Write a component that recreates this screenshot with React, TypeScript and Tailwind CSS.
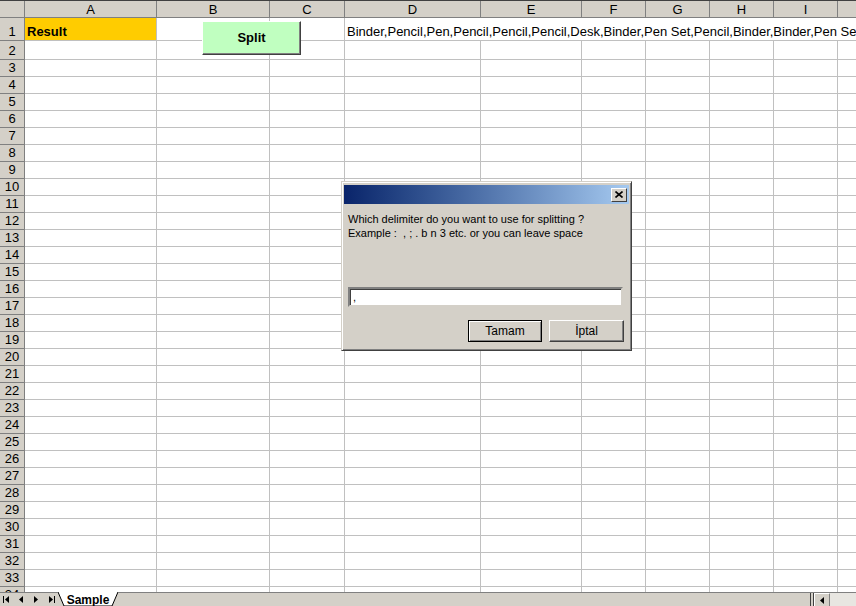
import React from 'react'

const COLS = ['A', 'B', 'C', 'D', 'E', 'F', 'G', 'H', 'I', 'J']
const GRID = 'grid grid-cols-[25px_132px_113px_75px_136px_101px_64px_64px_64px_64px_64px]'
const ROW1_TEXT =
  'Binder,Pencil,Pen,Pencil,Pencil,Pencil,Desk,Binder,Pen Set,Pencil,Binder,Binder,Pen Set,Desk,Pencil,Binder'

const HeaderRow: React.FC = () => (
  <div className={`${GRID} h-[18px] shrink-0 border-t border-[#404040]`}>
    <div className="bg-[#d4d0c8] border-r border-b border-[#808080]" />
    {COLS.map((c) => (
      <div
        key={c}
        className="bg-[#d4d0c8] border-r border-b border-[#808080] flex items-center justify-center text-[13px] leading-none text-black"
      >
        {c}
      </div>
    ))}
  </div>
)

const RowLabel: React.FC<{ n: number }> = ({ n }) => (
  <div className="bg-[#d4d0c8] border-r border-b border-[#808080] flex items-end justify-center pb-[2px] text-[13px] leading-none text-black">
    {n}
  </div>
)

const FirstRow: React.FC = () => (
  <div className={`${GRID} h-[23px] shrink-0`}>
    <div className="bg-[#d4d0c8] border-r border-b border-[#808080] flex items-end justify-center pb-[2px] text-[13px] leading-none text-black">
      1
    </div>
    <div className="bg-[#ffcc00] border-r border-b border-[#c0c0c0] flex items-end pb-[2px] pl-[2px] text-[13px] leading-none font-bold text-black">
      Result
    </div>
    <div className="border-r border-b border-[#c0c0c0]" />
    <div className="border-r border-b border-[#c0c0c0]" />
    <div className="col-span-7 border-b border-[#c0c0c0] flex items-end pb-[2px] pl-[2px] text-[13px] leading-none text-black whitespace-nowrap overflow-hidden">
      {ROW1_TEXT}
    </div>
  </div>
)

const DataRow: React.FC<{ n: number; tall?: boolean }> = ({ n, tall }) => (
  <div className={`${GRID} ${tall ? 'h-[19px]' : 'h-[17px]'} shrink-0`}>
    <RowLabel n={n} />
    {COLS.map((c) => (
      <div key={c} className="border-r border-b border-[#c0c0c0]" />
    ))}
  </div>
)

const SheetTabs: React.FC = () => (
  <div className="h-[14px] shrink-0 bg-[#d4d0c8] border-t border-[#808080] flex items-stretch">
    <div className="w-[58px] flex items-center gap-[10px] pl-[3px]">
      <svg width="6" height="7" viewBox="0 0 6 7">
        <rect x="0" y="0" width="1" height="7" fill="#000" />
        <polygon points="6,0 2,3.5 6,7" fill="#000" />
      </svg>
      <svg width="5" height="7" viewBox="0 0 5 7">
        <polygon points="4,0 0,3.5 4,7" fill="#000" />
      </svg>
      <svg width="5" height="7" viewBox="0 0 5 7">
        <polygon points="0,0 4,3.5 0,7" fill="#000" />
      </svg>
      <svg width="6" height="7" viewBox="0 0 6 7">
        <polygon points="0,0 4,3.5 0,7" fill="#000" />
        <rect x="5" y="0" width="1" height="7" fill="#000" />
      </svg>
    </div>
    <div className="relative w-[60px] -mt-px flex items-center justify-center text-[12px] font-bold text-black leading-none">
      <svg className="absolute inset-0" width="60" height="15" viewBox="0 0 60 15">
        <polygon points="0,0 60,0 54,14 6,14" fill="#fff" />
        <polyline points="0,0 6,14 54,14 60,0" fill="none" stroke="#000" strokeWidth="1" />
      </svg>
      <span className="relative pt-px">Sample</span>
    </div>
    <div className="flex-1" />
    <div className="w-[4px] border-l border-r border-[#404040] bg-[#d4d0c8]" />
    <div className="w-[16px] bg-[#d4d0c8] border-l border-t border-white border-r border-b-0 border-r-[#808080] flex items-center justify-center">
      <svg width="4" height="7" viewBox="0 0 4 7">
        <polygon points="4,0 0,3.5 4,7" fill="#000" />
      </svg>
    </div>
    <div className="w-[26px] bg-[#e8e6e1]" />
  </div>
)

const InputDialog: React.FC = () => (
  <div className="absolute left-[341px] top-[181px] w-[291px] h-[170px] bg-[#d4d0c8] border border-t-[#d4d0c8] border-l-[#d4d0c8] border-r-[#404040] border-b-[#404040] shadow-[inset_1px_1px_0_#fff,inset_-1px_-1px_0_#808080]">
    <div className="p-[2px] pt-[3px] h-full flex flex-col">
      <div className="h-[19px] bg-gradient-to-r from-[#0a246a] to-[#a6caf0] flex items-center justify-end pr-[2px]">
        <div className="w-[16px] h-[14px] bg-[#d4d0c8] border border-t-white border-l-white border-r-[#404040] border-b-[#404040] flex items-center justify-center">
          <svg width="8" height="7" viewBox="0 0 8 7">
            <path d="M0.5 0.5 L7.5 6.5 M7.5 0.5 L0.5 6.5" stroke="#000" strokeWidth="1.6" />
          </svg>
        </div>
      </div>
      <div className="flex-1 flex flex-col px-[4px] pt-[8px] text-[11px] leading-[14px] text-black">
        <p>Which delimiter do you want to use for splitting ?</p>
        <p className="whitespace-pre">Example :  , ; . b n 3 etc. or you can leave space</p>
        <div className="mt-[47px] h-[20px] w-[275px] bg-white border-2 border-t-[#808080] border-l-[#808080] border-r-[#d4d0c8] border-b-[#d4d0c8] shadow-[inset_1px_1px_0_#404040] flex items-center pl-[3px] text-[11px]">
          ,
        </div>
        <div className="mt-[13px] flex justify-end gap-[7px] pr-[1px]">
          <button className="w-[74px] h-[22px] bg-[#d4d0c8] border border-black shadow-[inset_1px_1px_0_#fff,inset_-1px_-1px_0_#808080] text-[12px] text-black">
            Tamam
          </button>
          <button className="w-[75px] h-[22px] bg-[#d4d0c8] border border-t-white border-l-white border-r-[#404040] border-b-[#404040] shadow-[inset_-1px_-1px_0_#808080] text-[12px] text-black">
            İptal
          </button>
        </div>
      </div>
    </div>
  </div>
)

export default function App() {
  const rows = Array.from({ length: 34 }, (_, i) => i + 2)
  return (
    <div className="relative w-[856px] h-[606px] overflow-hidden bg-white flex flex-col font-['Liberation_Sans',Arial,sans-serif]">
      <div className="flex-1 flex flex-col overflow-hidden">
        <HeaderRow />
        <FirstRow />
        {rows.map((n) => (
          <DataRow key={n} n={n} tall={n === 2} />
        ))}
      </div>
      <SheetTabs />

      {/* floating sheet button */}
      <button className="absolute left-[202px] top-[21px] w-[99px] h-[34px] bg-[#c0ffc0] border border-t-white border-l-white border-r-[#404040] border-b-[#404040] shadow-[inset_-1px_-1px_0_#808080] text-[13px] font-bold text-black">
        Split
      </button>

      <InputDialog />
    </div>
  )
}
